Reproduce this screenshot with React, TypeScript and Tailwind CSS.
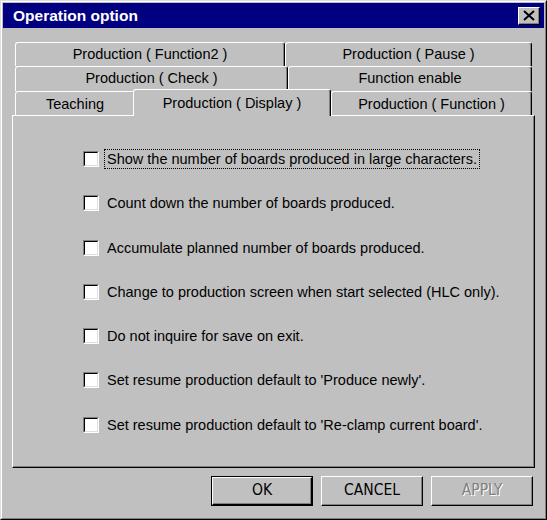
const options = [
  "Show the number of boards produced in large characters.",
  "Count down the number of boards produced.",
  "Accumulate planned number of boards produced.",
  "Change to production screen when start selected (HLC only).",
  "Do not inquire for save on exit.",
  "Set resume production default to 'Produce newly'.",
  "Set resume production default to 'Re-clamp current board'.",
];

const Tab = ({ label, className = "" }: { label: string; className?: string }) => (
  <div
    className={`flex items-center justify-center h-full border-t border-l border-r border-t-white border-l-white border-r-black rounded-t-[3px] shadow-[inset_-1px_0_0_#808080] ${className}`}
  >
    {label}
  </div>
);

const Checkbox = () => (
  <div className="w-[16px] h-[16px] shrink-0 border border-t-[#808080] border-l-[#808080] border-r-white border-b-white">
    <div className="w-full h-full bg-white border border-t-black border-l-black border-r-[#dfdfdf] border-b-[#dfdfdf]" />
  </div>
);

const Button = ({ label, isDefault, disabled }: { label: string; isDefault?: boolean; disabled?: boolean }) => (
  <div className={`w-[102px] h-[30px] ${isDefault ? "border border-black" : ""}`}>
    <div className="w-full h-full flex items-center justify-center border border-t-white border-l-white border-r-black border-b-black shadow-[inset_-1px_-1px_0_#808080] font-['DejaVu_Sans',sans-serif] font-stretch-condensed text-[15.5px]">
      <span className={disabled ? "text-[#808080] [text-shadow:1px_1px_0_#fff]" : "text-black"}>{label}</span>
    </div>
  </div>
);

export default function App() {
  return (
    <div className="w-[547px] h-[520px] bg-[#c0c0c0] border border-t-[#dfdfdf] border-l-[#dfdfdf] border-r-black border-b-black font-['Liberation_Sans',sans-serif] text-[14.5px] text-black">
      <div className="w-full h-full border border-t-white border-l-white border-r-[#808080] border-b-[#808080] p-[1px] flex flex-col">
        {/* title bar */}
        <div className="h-[25px] bg-[#000080] flex items-center justify-between pl-[10px] pr-[4px]">
          <span className="text-white font-bold text-[15.5px]">Operation option</span>
          <div className="w-[22px] h-[18px] bg-[#c0c0c0] border border-t-white border-l-white border-r-black border-b-black shadow-[inset_-1px_-1px_0_#808080] flex items-center justify-center">
            <svg width="12" height="11" viewBox="0 0 12 11">
              <path d="M1 1 L11 10 M11 1 L1 10" stroke="black" strokeWidth="2" />
            </svg>
          </div>
        </div>

        <div className="flex flex-col pl-[9px] pt-[14px]">
          <div className="w-[523px]">
            {/* tab rows */}
            <div className="px-[3px]">
              <div className="flex h-[24px]">
                <Tab label="Production ( Function2 )" className="w-[270px]" />
                <Tab label="Production ( Pause )" className="flex-1" />
              </div>
              <div className="flex h-[25px]">
                <Tab label="Production ( Check )" className="w-[273px]" />
                <Tab label="Function enable" className="flex-1" />
              </div>
              <div className="flex h-[24px] items-end">
                <Tab label="Teaching" className="w-[120px] pt-[3px]" />
                <div className="relative z-10 -ml-[2px] -mb-[1px] w-[198px] h-[27px] bg-[#c0c0c0] flex items-start justify-center pt-[3px] border-t border-l border-r border-t-white border-l-white border-r-black rounded-t-[3px] shadow-[inset_-1px_0_0_#808080]">
                  Production ( Display )
                </div>
                <Tab label="Production ( Function )" className="flex-1 pt-[3px]" />
              </div>
            </div>

            {/* panel */}
            <div className="h-[353px] border border-t-white border-l-white border-r-black border-b-black shadow-[inset_-1px_-1px_0_#808080] pl-[70px] pt-[35px] flex flex-col gap-[28.3px]">
              {options.map((o, i) => (
                <div key={o} className="flex items-center h-[16px] gap-[6px]">
                  <Checkbox />
                  <span className={`px-[2px] py-[1px] leading-[16px] ${i === 0 ? "outline outline-1 outline-dotted outline-black" : ""}`}>{o}</span>
                </div>
              ))}
            </div>

            {/* buttons */}
            <div className="flex justify-end gap-[8px] mt-[8px] pr-[2px]">
              <Button label="OK" isDefault />
              <Button label="CANCEL" />
              <Button label="APPLY" disabled />
            </div>
          </div>
        </div>
      </div>
    </div>
  );
}
